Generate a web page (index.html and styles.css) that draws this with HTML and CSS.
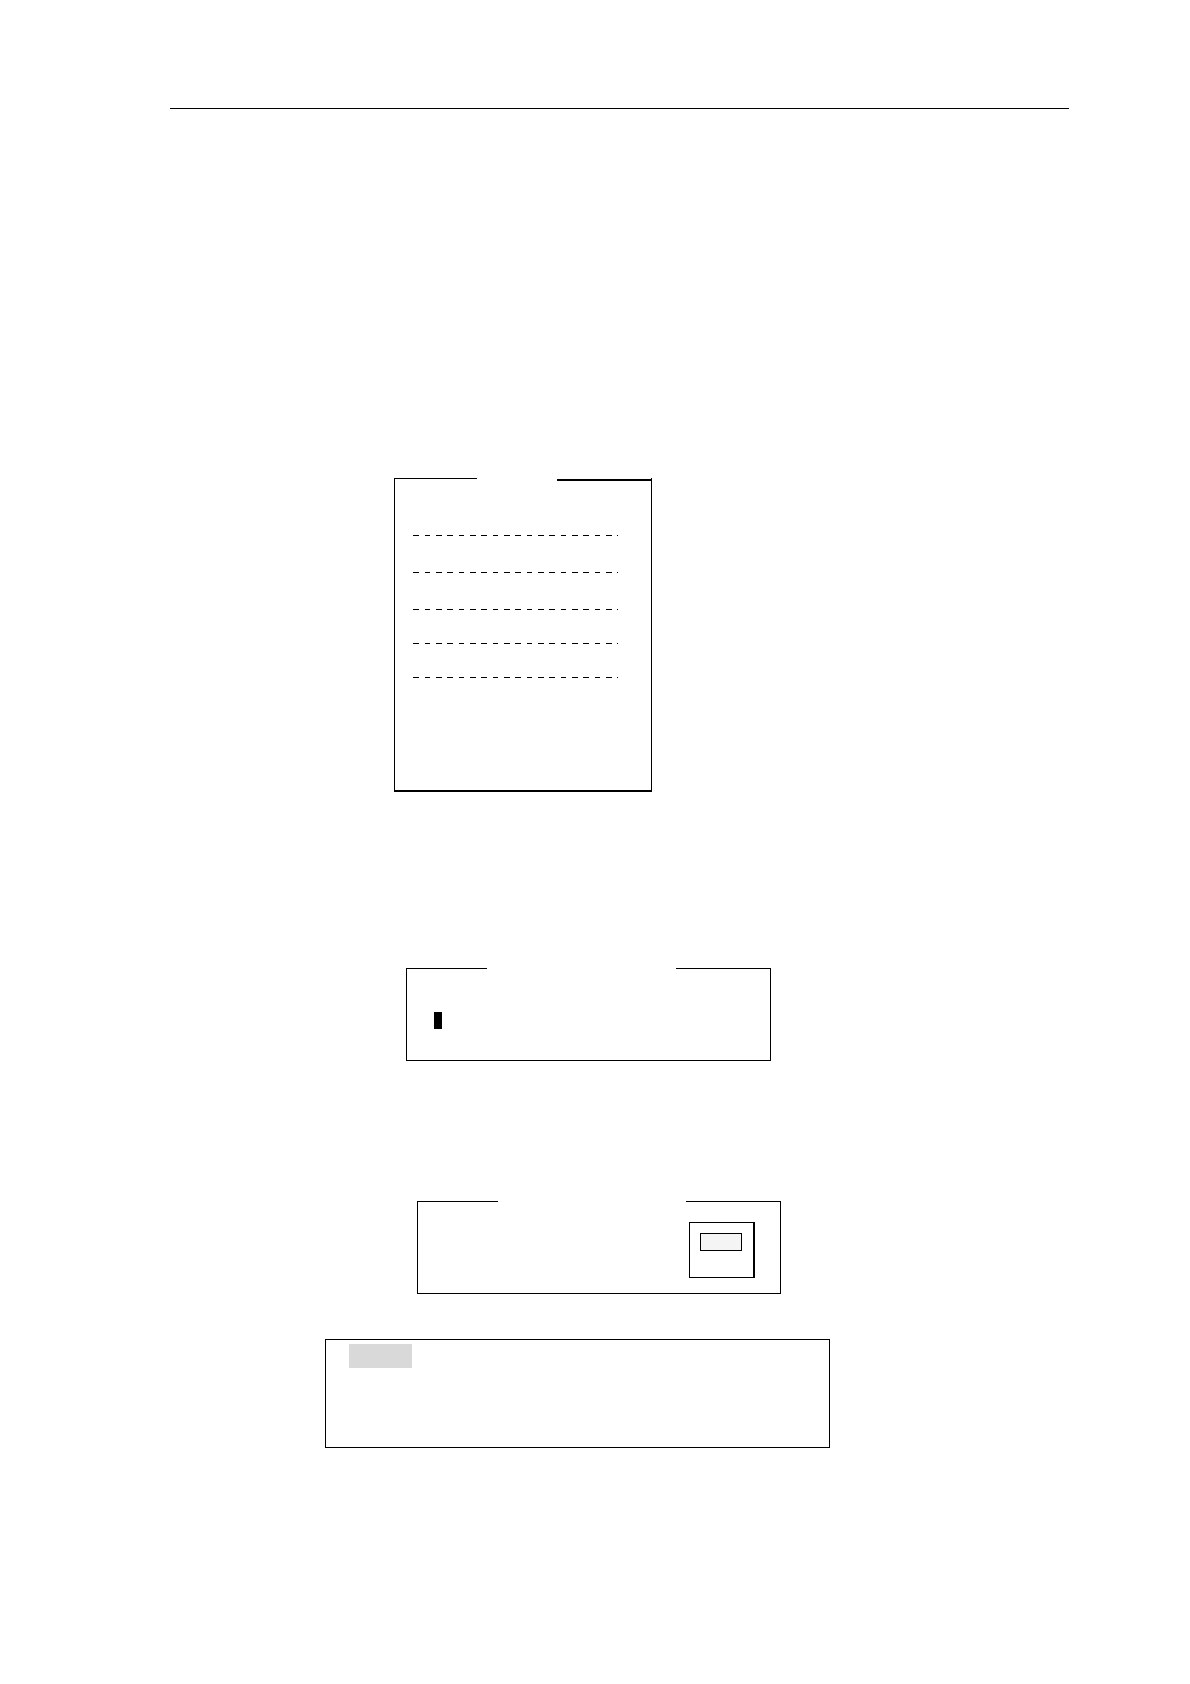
FILE: index.html
```html
<!doctype html>
<html>
<head>
    <meta charset="utf-8">
    <title>Menu</title>
    <link rel="stylesheet" href="styles.css">
</head>

<body>
<div class="page">
    <hr class="page-rule">

    <div class="panel menu">
        <div class="panel-top">
            <span class="edge-left"></span>
            <span class="edge-right edge-thick"></span>
        </div>
        <div class="menu-body">
            <hr class="dash">
            <hr class="dash">
            <hr class="dash">
            <hr class="dash dash-tight">
            <hr class="dash dash-tight">
        </div>
    </div>

    <div class="panel prompt">
        <div class="panel-top">
            <span class="edge-left"></span>
            <span class="edge-right"></span>
        </div>
        <div class="prompt-body">
            <span class="cursor"></span>
        </div>
    </div>

    <div class="panel insert">
        <div class="panel-top">
            <span class="edge-left"></span>
            <span class="edge-right"></span>
        </div>
        <div class="insert-body">
            <div class="disk">
                <div class="disk-label"></div>
            </div>
        </div>
    </div>

    <div class="note">
        <div class="note-mark"></div>
    </div>
</div>
</body>

</html>
```

FILE: styles.css
```css
* {box-sizing: border-box;}
body {margin: 0; background: #fff; font-family: "Liberation Sans", sans-serif;}
.page {padding: 108px 121px 236px 170px; display: flex; flex-direction: column;}
.page-rule {width: 100%; height: 1px; margin: 0; border: 0; background: #000;}

/* boxes with an open stretch in the top edge */
.panel {width: 100%; border: 1px solid #000; border-top: 0;}
.panel-top {display: flex; justify-content: space-between; height: 3px;}
.edge-left {width: 80px; border-top: 1px solid #000;}
.edge-right {width: 94px; border-top: 1px solid #000;}
.edge-thick {margin-top: 1px; border-top-width: 2px;}

.menu {max-width: 258px; margin: 369px 0 0 224px; border-bottom-width: 2px;}
.menu .edge-left {width: 82px;}
.menu-body {padding: 54px 33px 112px 18px;}
.dash {height: 1px; margin: 0; border: 0; background: repeating-linear-gradient(to right, #000 0 6px, transparent 6px 12px, #000 12px 17px, transparent 17px 23px, #000 23px 29px, transparent 29px 34px);}
.dash + .dash {margin-top: 36px;}
.dash + .dash-tight {margin-top: 33px;}

.prompt {max-width: 365px; margin: 176px 0 0 236px;}
.prompt-body {padding: 41px 27px 31px;}
.cursor {display: block; width: 8px; height: 17px; background: #000;}

.insert {max-width: 364px; margin: 140px 0 0 247px;}
.insert-body {display: flex; justify-content: flex-end; padding: 18px 25px 15px;}
.disk {width: 66px; height: 56px; padding: 10px; border: 1px solid #000; border-right-width: 2px;}
.disk-label {width: 42px; height: 18px; border: 1px solid #000; background: #f4f4f4;}

.note {width: 100%; max-width: 505px; margin: 45px 0 0 155px; padding: 4px 23px 79px; border: 1px solid #000;}
.note-mark {width: 63px; height: 24px; background: #d9d9d9;}
```
